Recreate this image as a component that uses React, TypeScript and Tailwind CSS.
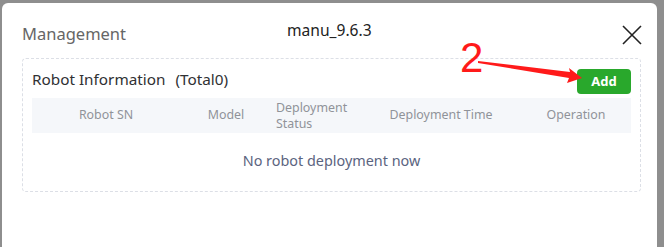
import React from "react";

export default function App() {
  const font = { fontFamily: '"Noto Sans", "Open Sans", sans-serif' };
  return (
    <div className="w-[664px] h-[247px] bg-[#8e8e8e] pt-[3px] pl-[2px] pr-[7px] overflow-hidden" style={font}>
      <div className="relative h-[244px] bg-white rounded-t-[6px]">
        {/* header */}
        <div className="relative h-[56px]">
          <div className="absolute left-[20px] top-[18px] text-[16.5px] leading-[26px] text-[#666]">Management</div>
          <div className="absolute left-[285px] top-[16px] text-[15.6px] leading-[22px] text-[#222]">manu_9.6.3</div>
          <svg className="absolute left-[619px] top-[21px]" width="22" height="22" viewBox="0 0 22 22">
            <path d="M2 2 L20 20 M20 2 L2 20" stroke="#222" strokeWidth="1.6" fill="none" />
          </svg>
        </div>
        {/* card */}
        <div className="ml-[20px] mr-[16px] mt-[-1px] h-[134px] border border-dashed border-[#dcdfe6] rounded-[4px] px-[9px] pt-[9px]">
          <div className="flex items-center justify-between h-[26px]">
            <div className="text-[15.3px] text-[#303133] leading-[24px] -mt-[4px]">
              Robot Information<span className="ml-[10px]">(Total0)</span>
            </div>
            <button className="w-[54px] h-[25px] bg-[#29a82c] rounded-[4px] text-white text-[13px] font-bold leading-[25px]">
              Add
            </button>
          </div>
          <div className="mt-[4px] grid grid-cols-[148px_92px_88px_162px_108px] h-[35px] bg-[#f5f7fa] items-center text-[12.4px] text-[#909399]">
            <div className="text-center">Robot SN</div>
            <div className="text-center">Model</div>
            <div className="pl-[4px] leading-[16px] flex flex-col">
              <span>Deployment</span>
              <span>Status</span>
            </div>
            <div className="text-center">Deployment Time</div>
            <div className="text-center">Operation</div>
          </div>
          <div className="h-[58px] flex items-center justify-center text-[14.4px] text-[#5b6480] pb-[2px]">
            No robot deployment now
          </div>
        </div>
        {/* annotation */}
        <div
          className="absolute left-[458px] top-[30px] text-[42px] leading-[50px] text-[#ff1a1a]"
          style={{ fontFamily: '"Liberation Sans", Arial, sans-serif' }}
        >
          2
        </div>
        <svg className="absolute left-[470px] top-[50px]" width="120" height="40" viewBox="0 0 120 40">
          <polygon points="6,8 98,19 97,15 110,25 95,30 97,25 6,10" fill="#ff1a1a" />
        </svg>
      </div>
    </div>
  );
}
